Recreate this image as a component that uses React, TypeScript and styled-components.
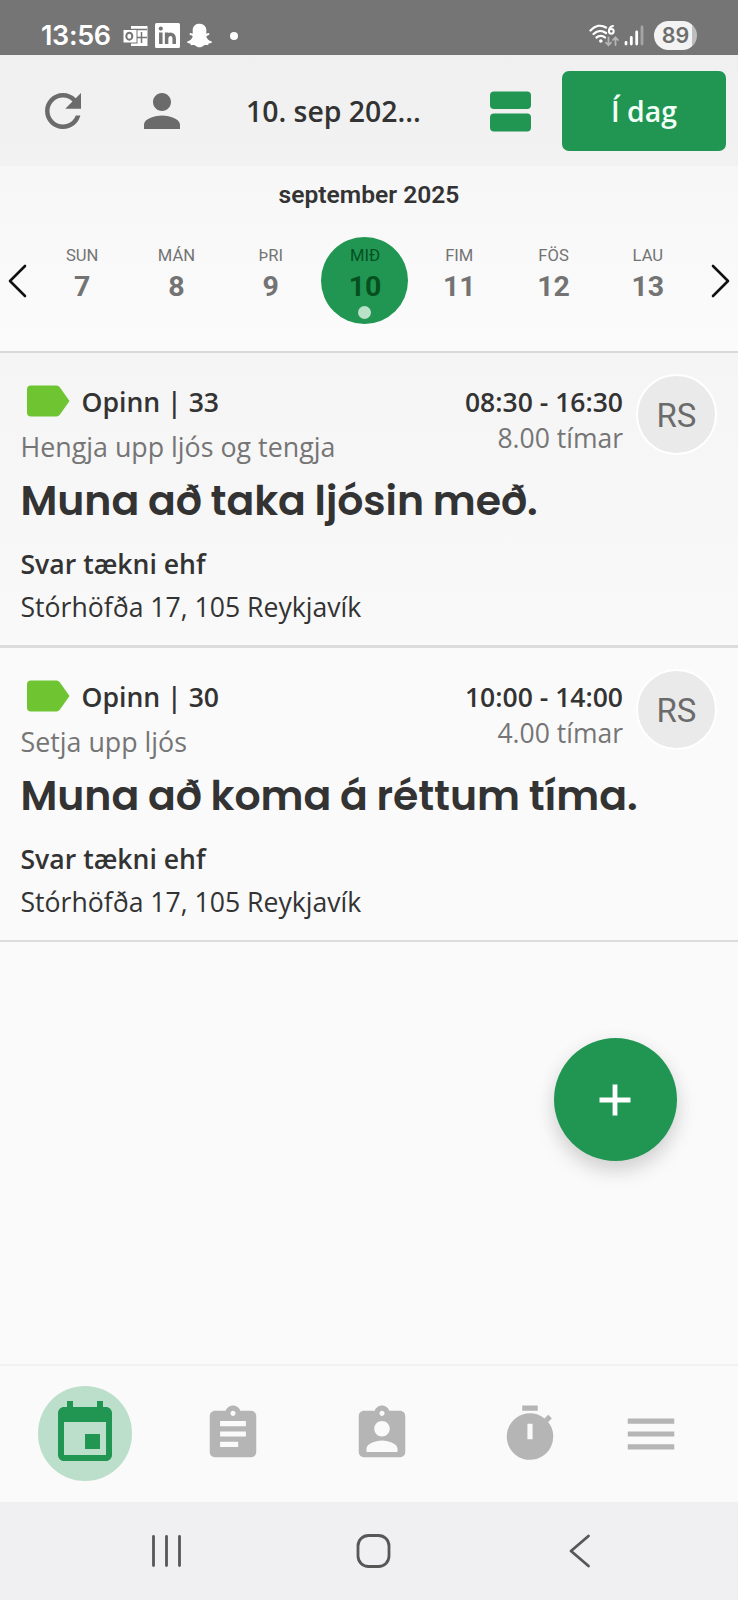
import React from "react";
import styled, { createGlobalStyle } from "styled-components";
import { FaSnapchatGhost } from "react-icons/fa";

const GREEN = "#219653";

const Global = createGlobalStyle`
  * { box-sizing: border-box; }
  body { margin: 0; background: #fafafa; font-family: "Open Sans", "Noto Sans", sans-serif; color: #333; }
`;

const Screen = styled.div`
  position: relative;
  display: flex;
  flex-direction: column;
  width: 738px;
  height: 1600px;
  overflow: hidden;
  background: #fafafa;
`;

const StatusBar = styled.div`
  display: flex;
  align-items: center;
  flex: none;
  height: 55px;
  padding: 16px 41px 0 41px;
  background: #757575;
  color: #fff;
`;

const Clock = styled.span`
  width: 82px;
  font: 600 27px/32px Inter, sans-serif;
  letter-spacing: -0.35px;
`;

const StatusIcons = styled.div`
  display: flex;
  align-items: center;
  gap: 7px;
  svg { display: block; }
`;

const Dot = styled.i`
  width: 8px;
  height: 8px;
  margin-left: 11px;
  border-radius: 50%;
  background: #fff;
`;

const StatusRight = styled.div`
  display: flex;
  align-items: center;
  margin-left: auto;
  svg { display: block; }
`;

const Battery = styled.span`
  width: 43px;
  height: 29px;
  margin-left: 10px;
  border-radius: 15px;
  background: linear-gradient(90deg, #f3f3f3 89%, #bdbdbd 89%);
  color: #6e6e6e;
  font: 600 21.5px/28px Inter, sans-serif;
  text-align: center;
`;

const Header = styled.header`
  display: flex;
  align-items: center;
  flex: none;
  height: 111px;
  padding: 1px 12px 0 36px;
  background: linear-gradient(#f0f0f0, #f2f2f2);
`;

const IconButton = styled.button<{ $gap: number }>`
  display: flex;
  flex: none;
  margin: 0 ${(p) => p.$gap}px 0 0;
  padding: 0;
  border: 0;
  background: none;
  color: #6b6b6b;
`;

const DateTitle = styled.h1`
  width: 244px;
  margin: 0;
  font-size: 28.4px;
  font-weight: 600;
  line-height: 40px;
  white-space: nowrap;
`;

const TodayButton = styled.button`
  width: 164px;
  height: 80px;
  margin-left: auto;
  padding: 0;
  border: 0;
  border-radius: 7px;
  background: ${GREEN};
  color: #f2fff7;
  font: 600 28.4px "Open Sans", sans-serif;
`;

const Calendar = styled.section`
  flex: none;
  height: 187px;
  border-bottom: 2px solid #d9d9d9;
  background: linear-gradient(#f7f7f7, #fbfbfb);
  font-family: Roboto, sans-serif;
`;

const Month = styled.h2`
  margin: 0;
  padding-top: 14px;
  font-size: 24.6px;
  font-weight: 600;
  line-height: 30px;
  text-align: center;
`;

const Week = styled.div`
  display: flex;
  align-items: center;
  margin-top: 27px;
  padding: 0 7px;
`;

const Days = styled.div`
  display: grid;
  grid-template-columns: repeat(7, 1fr);
  justify-items: center;
  width: 660px;
  margin: 0 15px 0 7px;
`;

const Day = styled.div<{ $on: boolean }>`
  display: flex;
  flex-direction: column;
  align-items: center;
  width: 87px;
  height: 87px;
  padding-top: 9px;
  border-radius: 50%;
  background: ${(p) => (p.$on ? GREEN : "transparent")};
  color: ${(p) => (p.$on ? "#06501f" : "#737373")};
`;

const DayName = styled.span`
  font-size: 16.6px;
  line-height: 20px;
`;

const DayNumber = styled.span`
  margin-top: 4px;
  font-size: 28.5px;
  font-weight: 700;
  line-height: 34px;
`;

const EventDot = styled.i`
  width: 13px;
  height: 13px;
  margin-top: 2px;
  border-radius: 50%;
  background: #b9e2c9;
`;

const Card = styled.article<{ $first: boolean }>`
  display: flex;
  flex: none;
  justify-content: space-between;
  height: ${(p) => (p.$first ? 295 : 294)}px;
  padding: 27px 21px 0 20.5px;
  border-bottom: ${(p) => (p.$first ? 3 : 2)}px solid #dcdcdc;
  background: ${(p) => (p.$first ? "linear-gradient(#f5f5f5, #f9f9f9)" : "#fafafa")};
  font-size: 26.6px;
  white-space: nowrap;
`;

const Details = styled.div`
  width: 0;
`;

const Status = styled.div`
  display: flex;
  align-items: center;
  height: 43px;
  padding-left: 6px;
  font-weight: 600;
  svg { flex: none; margin: -1px 12px 0 0; }
`;

const Task = styled.div`
  color: #757575;
  font-size: 26.8px;
  line-height: 47px;
`;

const Title = styled.h3`
  margin: 0;
  font: 600 41px/62px Poppins, Inter, sans-serif;
  letter-spacing: -0.06px;
  word-spacing: -0.9px;
`;

const Customer = styled.div`
  margin-top: 11px;
  font-weight: 600;
  font-size: 26.6px;
  line-height: 42px;
`;

const Address = styled.div`
  font-size: 26.6px;
  line-height: 45px;
`;

const Assigned = styled.div`
  display: flex;
  align-items: flex-start;
  gap: 13px;
`;

const Times = styled.div`
  text-align: right;
`;

const Range = styled.div`
  font-weight: 600;
  font-size: 26.5px;
  line-height: 44px;
`;

const Hours = styled.div`
  color: #757575;
  font-size: 26.5px;
  line-height: 28px;
`;

const Avatar = styled.div`
  width: 81px;
  height: 81px;
  margin-top: -6px;
  border: 2px solid #fff;
  border-radius: 50%;
  background: #eaeaea;
  color: #6b6b6b;
  font: 400 33px/79px Roboto, sans-serif;
  text-align: center;
`;

const Fab = styled.button`
  position: absolute;
  top: 1038px;
  left: 553.5px;
  display: grid;
  place-items: center;
  width: 123px;
  height: 123px;
  padding: 0;
  border: 0;
  border-radius: 50%;
  background: ${GREEN};
  box-shadow: 0 10px 20px rgba(0, 0, 0, 0.15), 0 3px 22px rgba(0, 0, 0, 0.04);
`;

const TabBar = styled.nav`
  display: flex;
  flex: none;
  align-items: center;
  height: 138px;
  margin-top: auto;
  padding: 0 0 1px 37.5px;
  border-top: 2px solid #f1f1f1;
  color: #b5b5b5;
`;

const Tab = styled.div<{ $active?: boolean; $gap: number }>`
  display: grid;
  flex: none;
  place-items: center;
  width: ${(p) => (p.$active ? 94.5 : 62)}px;
  height: ${(p) => (p.$active ? 94.5 : 62)}px;
  margin-right: ${(p) => p.$gap}px;
  border-radius: 50%;
  background: ${(p) => (p.$active ? "#bcdfcb" : "none")};
  color: ${(p) => (p.$active ? GREEN : "inherit")};
`;

const SystemNav = styled.div`
  display: flex;
  flex: none;
  align-items: center;
  height: 98px;
  padding-left: 151px;
  background: #f0f0f2;
`;

const SystemKey = styled.svg<{ $gap: number }>`
  flex: none;
  margin-right: ${(p) => p.$gap}px;
  fill: none;
  stroke: #575757;
  stroke-width: 2.8;
  stroke-linecap: round;
  stroke-linejoin: round;
`;

const SignalIcon = styled.svg`
  margin-left: 5px;
`;

const Glyph = ({ d, size }: { d: string; size: number }) => (
  <svg width={size} height={size} viewBox="0 0 24 24" fill="currentColor">
    <path d={d} />
  </svg>
);

const paths = {
  refresh:
    "M17.65 6.35C16.2 4.9 14.21 4 12 4c-4.42 0-7.99 3.58-7.99 8s3.57 8 7.99 8c3.73 0 6.84-2.55 7.73-6h-2.08c-.82 2.33-3.04 4-5.65 4-3.31 0-6-2.69-6-6s2.69-6 6-6c1.66 0 3.14.69 4.22 1.78L13 11h7V4l-2.35 2.35z",
  person:
    "M12 12c2.21 0 4-1.79 4-4s-1.79-4-4-4-4 1.79-4 4 1.79 4 4 4zm0 2c-2.67 0-8 1.34-8 4v2h16v-2c0-2.66-5.33-4-8-4z",
  event:
    "M17 12h-5v5h5v-5zM16 1v2H8V1H6v2H5c-1.11 0-1.99.9-1.99 2L3 19c0 1.1.89 2 2 2h14c1.1 0 2-.9 2-2V5c0-1.1-.9-2-2-2h-1V1h-2zm3 18H5V8h14v11z",
  assignment:
    "M19 3h-4.18C14.4 1.84 13.3 1 12 1c-1.3 0-2.4.84-2.82 2H5c-1.1 0-2 .9-2 2v14c0 1.1.9 2 2 2h14c1.1 0 2-.9 2-2V5c0-1.1-.9-2-2-2zm-7 0c.55 0 1 .45 1 1s-.45 1-1 1-1-.45-1-1 .45-1 1-1zm2 14H7v-2h7v2zm3-4H7v-2h10v2zm0-4H7V7h10v2z",
  badge:
    "M19 3h-4.18C14.4 1.84 13.3 1 12 1c-1.3 0-2.4.84-2.82 2H5c-1.1 0-2 .9-2 2v14c0 1.1.9 2 2 2h14c1.1 0 2-.9 2-2V5c0-1.1-.9-2-2-2zm-7 0c.55 0 1 .45 1 1s-.45 1-1 1-1-.45-1-1 .45-1 1-1zm0 4c1.66 0 3 1.34 3 3s-1.34 3-3 3-3-1.34-3-3 1.34-3 3-3zm6 12H6v-1.4c0-2 4-3.1 6-3.1s6 1.1 6 3.1V19z",
  timer:
    "M9 1h6v2H9zM19.03 7.39l1.42-1.42c-.43-.51-.9-.99-1.41-1.41l-1.42 1.42A8.962 8.962 0 0 0 12 4c-4.97 0-9 4.03-9 9s4.02 9 9 9a8.994 8.994 0 0 0 7.03-14.61zM13 14h-2V8h2v6z",
  menu: "M3 18h18v-2H3v2zm0-5h18v-2H3v2zm0-7v2h18V6H3z",
};

const days: [string, number][] = [
  ["SUN", 7], ["MÁN", 8], ["ÞRI", 9], ["MIÐ", 10], ["FIM", 11], ["FÖS", 12], ["LAU", 13],
];

const jobs = [
  { id: 33, task: "Hengja upp ljós og tengja", title: "Muna að taka ljósin með.", range: "08:30 - 16:30", hours: "8.00 tímar" },
  { id: 30, task: "Setja upp ljós", title: "Muna að koma á réttum tíma.", range: "10:00 - 14:00", hours: "4.00 tímar" },
];

const Chevron = ({ d }: { d: string }) => (
  <svg width="21" height="36" viewBox="0 0 21 36" fill="none" stroke="#111" strokeWidth="2.6" strokeLinecap="round" strokeLinejoin="round">
    <path d={d} />
  </svg>
);

export default function App() {
  return (
    <Screen>
      <Global />
      <StatusBar>
        <Clock>13:56</Clock>
        <StatusIcons>
          <svg width="25" height="22" viewBox="0 0 25 22">
            <path d="M8 1h16.500v20H8z" fill="#fff" />
            <path d="M8 4.500h16M13 12.500h11M18.500 7v11" stroke="#757575" strokeWidth="1.500" fill="none" />
            <rect x="0" y="4.500" width="14" height="13.500" fill="#fff" stroke="#757575" strokeWidth="1" />
            <ellipse cx="6.300" cy="11.200" rx="3" ry="3.500" fill="none" stroke="#757575" strokeWidth="2" />
          </svg>
          <svg width="25" height="25" viewBox="0 0 25 25">
            <rect width="25" height="25" rx="1.500" fill="#fff" />
            <circle cx="5.800" cy="5.600" r="2.100" fill="#757575" />
            <path d="M5.800 9.500v11.500M11.600 9.500v11.500M11.600 15.500c0-5.500 7.600-6 7.600 0v5.500" fill="none" stroke="#757575" strokeWidth="3.500" />
          </svg>
          <FaSnapchatGhost size={25} />
          <Dot />
        </StatusIcons>
        <StatusRight>
          <svg width="30" height="26" viewBox="0 0 30 26" fill="none" stroke="#fff" strokeLinecap="round">
            <path d="M1.500 7.500C6 2.500 12 1.500 17 4.500" strokeWidth="2.300" />
            <path d="M4.500 11C8 7.500 13 7 17 10" strokeWidth="2.300" />
            <path d="M7.500 14.500c2.500-2 6-2.200 8.500 0" strokeWidth="2.300" />
            <circle cx="11.800" cy="18" r="1.800" fill="#fff" stroke="none" />
            <path d="M24 3c-3 .5-4 3-4 5" strokeWidth="2" />
            <circle cx="22.300" cy="8.300" r="2.400" strokeWidth="2" />
            <g stroke="#b5b5b5" strokeWidth="1.800">
              <path d="M19.500 14.500v7.500M17 19.700l2.500 2.600 2.500-2.600M26.500 22v-7.500M24 17l2.500-2.600L29 17" />
            </g>
          </svg>
          <SignalIcon width="20" height="22" viewBox="0 0 20 22" strokeWidth="2.800" strokeLinecap="round" stroke="#fff">
            <path d="M2 17.500v1.500M7.300 12.500v6.500M12.700 7v12" />
            <path d="M18 2v17" stroke="#a5a5a5" />
          </SignalIcon>
          <Battery>89</Battery>
        </StatusRight>
      </StatusBar>

      <Header>
        <IconButton $gap={45} aria-label="Refresh"><Glyph d={paths.refresh} size={54} /></IconButton>
        <IconButton $gap={57} aria-label="Profile"><Glyph d={paths.person} size={54} /></IconButton>
        <DateTitle>10. sep 202...</DateTitle>
        <svg width="41" height="41" viewBox="0 0 41 41" fill={GREEN}>
          <rect y="0.500" width="41" height="17.500" rx="4" />
          <rect y="22.500" width="41" height="18" rx="4" />
        </svg>
        <TodayButton>Í dag</TodayButton>
      </Header>

      <Calendar>
        <Month>september 2025</Month>
        <Week>
          <Chevron d="M18 3 3 18 18 33" />
          <Days>
            {days.map(([name, n]) => (
              <Day key={n} $on={n === 10}>
                <DayName>{name}</DayName>
                <DayNumber>{n}</DayNumber>
                {n === 10 && <EventDot />}
              </Day>
            ))}
          </Days>
          <Chevron d="M3 3 18 18 3 33" />
        </Week>
      </Calendar>

      {jobs.map((job, i) => (
        <Card key={job.id} $first={i === 0}>
          <Details>
            <Status>
              <svg width="43" height="32" viewBox="0 0 43 32" fill="#6ec531">
                <path d="M4 0.500H29.500Q31.500 0.500 32.800 2.300L42.500 16 32.800 29.700Q31.500 31.500 29.500 31.500H4Q0 31.500 0 27.500V4.500Q0 .5 4 .5z" />
              </svg>
              Opinn | {job.id}
            </Status>
            <Task>{job.task}</Task>
            <Title>{job.title}</Title>
            <Customer>Svar tækni ehf</Customer>
            <Address>Stórhöfða 17, 105 Reykjavík</Address>
          </Details>
          <Assigned>
            <Times>
              <Range>{job.range}</Range>
              <Hours>{job.hours}</Hours>
            </Times>
            <Avatar>RS</Avatar>
          </Assigned>
        </Card>
      ))}

      <Fab aria-label="Add">
        <svg width="32" height="32" viewBox="0 0 32 32" stroke="#fff" strokeWidth="4.800">
          <path d="M16 0.500v31M.5 16h31" />
        </svg>
      </Fab>

      <TabBar>
        <Tab $active $gap={70}><Glyph d={paths.event} size={72} /></Tab>
        <Tab $gap={87}><Glyph d={paths.assignment} size={62} /></Tab>
        <Tab $gap={86}><Glyph d={paths.badge} size={62} /></Tab>
        <Tab $gap={59}><Glyph d={paths.timer} size={62} /></Tab>
        <Tab $gap={0}><Glyph d={paths.menu} size={62} /></Tab>
      </TabBar>

      <SystemNav>
        <SystemKey $gap={173.5} width="31" height="36"><path d="M2.500 3.500v29M15.500 3.500v29M28.500 3.500v29" /></SystemKey>
        <SystemKey $gap={177.5} width="35" height="36"><rect x="2" y="2.500" width="31" height="31" rx="10.500" /></SystemKey>
        <SystemKey $gap={0} width="24" height="36"><path d="M20.500 3 3 18 20.500 33" /></SystemKey>
      </SystemNav>
    </Screen>
  );
}
